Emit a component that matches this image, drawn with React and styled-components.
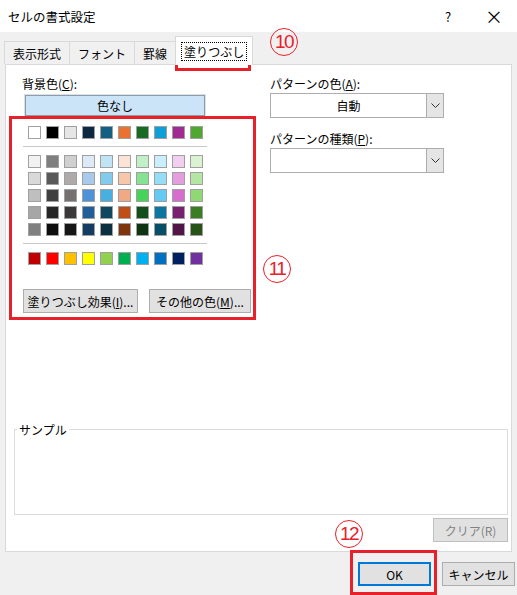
import React from "react";
import styled, { createGlobalStyle } from "styled-components";

const G = createGlobalStyle`
  html,body{margin:0;padding:0;background:#fff;}
  body{font-family:"Noto Sans CJK JP","Noto Sans",sans-serif;font-size:12px;color:#000;}
`;
const Win = styled.div`position:relative;width:517px;height:595px;background:#f0f0f0;overflow:hidden;display:flex;flex-direction:column;`;
const TitleBar = styled.div`height:32px;background:#fff;display:flex;align-items:center;padding-left:8px;font-size:12.5px;`;
const TitleText = styled.div`flex:1;`;
const TB = styled.div`width:46px;text-align:center;font-size:${p=>p.$s||14}px;`;
const Tabs = styled.div`display:flex;align-items:flex-end;padding:7px 0 0 5px;height:25px;`;
const Tab = styled.div`
  height:${p=>p.$on?28:22}px;padding:0 ${p=>p.$on?6:8}px;display:flex;align-items:center;
  border:1px solid #d9d9d9;border-bottom:none;margin-left:-1px;
  background:${p=>p.$on?"#fff":"#f0f0f0"};position:relative;z-index:${p=>p.$on?2:1};
  margin-bottom:${p=>p.$on?-1:0}px;
`;
const Focus = styled.span`outline:1px dotted #000;padding:0 2px;`;
const Panel = styled.div`margin:0 5px;height:486px;background:#fff;border:1px solid #d9d9d9;position:relative;display:flex;flex-direction:column;`;
const Cols = styled.div`display:flex;padding:10px 0 0 16px;gap:0;`;
const Left = styled.div`width:248px;display:flex;flex-direction:column;`;
const Right = styled.div`width:174px;display:flex;flex-direction:column;`;
const Label = styled.div`height:18px;line-height:18px;margin-bottom:${p=>p.$mb||0}px;`;
const U = styled.span`text-decoration:underline;`;
const NoColor = styled.div`width:178px;height:19px;margin-left:3px;border:1px solid #999;background:#cce4f7;text-align:center;line-height:19px;box-shadow:0 0 0 1px #cce4f7;`;
const Palette = styled.div`padding:10px 0 0 6px;display:flex;flex-direction:column;`;
const Row = styled.div`display:flex;gap:5px;margin-bottom:${p=>p.$mb||4}px;`;
const Sw = styled.div`width:11px;height:11px;border:1px solid #a0a0a0;background:${p=>p.$c};`;
const Sep = styled.div`width:184px;height:1px;background:#c8c8c8;margin:0 0 8px -5px;`;
const Btns = styled.div`display:flex;gap:11px;margin:20px 0 0 -5px;`;
const Btn = styled.div`height:24px;padding:0;white-space:nowrap;border:1px solid #adadad;background:#e1e1e1;display:flex;align-items:center;justify-content:center;width:${p=>p.$w}px;box-sizing:border-box;color:${p=>p.$dis?"#838383":"#000"};border-color:${p=>p.$dis?"#bfbfbf":"#adadad"};${p=>p.$def&&"border:2px solid #0078d7;"}`;
const Combo = styled.div`height:25px;border:1px solid #adadad;display:flex;box-sizing:border-box;margin-bottom:12px;`;
const ComboText = styled.div`flex:1;text-align:center;line-height:23px;`;
const Arrow = styled.div`width:16px;background:#e5e5e5;border-left:1px solid #adadad;display:flex;align-items:center;justify-content:center;`;
const Sample = styled.fieldset`margin:auto 3px 0 8px;height:92px;border:1px solid #dcdcdc;padding:0;`;
const Legend = styled.legend`padding:0 2px;margin-left:2px;font-size:12px;`;
const ClearRow = styled.div`display:flex;justify-content:flex-end;padding:3px 3px 9px 0;`;
const Footer = styled.div`display:flex;justify-content:flex-end;gap:11px;padding:10px 2px 0 0;`;
const Red = styled.div`position:absolute;border:3px solid #e8202a;left:${p=>p.$x}px;top:${p=>p.$y}px;width:${p=>p.$w}px;height:${p=>p.$h}px;box-sizing:border-box;pointer-events:none;`;
const Num = styled.div`position:absolute;left:${p=>p.$x}px;top:${p=>p.$y}px;width:28px;height:28px;border:1.5px solid #e8202a;border-radius:50%;color:#e8202a;font-family:"Liberation Sans",sans-serif;font-size:19px;display:flex;align-items:center;justify-content:center;box-sizing:border-box;letter-spacing:-1.5px;`;

const theme=["#ffffff","#000000","#e7e6e6","#0e2841","#156082","#e97132","#196b24","#0f9ed5","#a02b93","#4ea72e"];
const tints=[
["#f2f2f2","#7f7f7f","#d0d0d0","#dceaf7","#c0e4f5","#fbe3d6","#c1f0c8","#caeefb","#f2ceef","#daf2d0"],
["#d9d9d9","#595959","#aeaaaa","#a6c9ec","#83cbeb","#f7c7ac","#84e291","#95dcf7","#e59edd","#b4e5a2"],
["#bfbfbf","#404040","#757171","#4d93d9","#46b1e1","#f1a983","#47d359","#61cbf3","#d86dcd","#8ed973"],
["#a6a6a6","#262626","#3a3838","#215f9a","#0f4761","#c04f15","#124f1a","#0b769f","#782170","#3b7d23"],
["#808080","#0d0d0d","#171616","#153d64","#0a2f41","#7e350e","#0d3512","#074f69","#511548","#275317"]];
const std=["#c00000","#ff0000","#ffc000","#ffff00","#92d050","#00b050","#00b0f0","#0070c0","#002060","#7030a0"];

const Chev=()=>(<svg width="9" height="6" viewBox="0 0 9 6"><path d="M0.5 0.5 L4.5 4.5 L8.5 0.5" fill="none" stroke="#333" strokeWidth="1"/></svg>);

export default function App(){
  return(<Win><G/>
    <TitleBar><TitleText>セルの書式設定</TitleText><TB $s={13}>?</TB><TB $s={18}>×</TB></TitleBar>
    <Tabs><Tab>表示形式</Tab><Tab>フォント</Tab><Tab>罫線</Tab><Tab $on><Focus>塗りつぶし</Focus></Tab></Tabs>
    <Panel>
      <Cols>
        <Left>
          <Label $mb={2}>背景色(<U>C</U>):</Label>
          <NoColor>色なし</NoColor>
          <Palette>
            <Row $mb={7}>{theme.map((c,i)=><Sw key={i} $c={c}/>)}</Row>
            <Sep/>
            {tints.map((r,j)=><Row key={j} $mb={j===4?7:4}>{r.map((c,i)=><Sw key={i} $c={c}/>)}</Row>)}
            <Sep/>
            <Row>{std.map((c,i)=><Sw key={i} $c={c}/>)}</Row>
            <Btns><Btn $w={115}>塗りつぶし効果(<U>I</U>)...</Btn><Btn $w={102}>その他の色(<U>M</U>)...</Btn></Btns>
          </Palette>
        </Left>
        <Right>
          <Label>パターンの色(<U>A</U>):</Label>
          <Combo><ComboText>自動</ComboText><Arrow><Chev/></Arrow></Combo>
          <Label $mb={-6}>パターンの種類(<U>P</U>):</Label>
          <Combo style={{marginTop:6}}><ComboText/><Arrow><Chev/></Arrow></Combo>
        </Right>
      </Cols>
      <Sample><Legend>サンプル</Legend></Sample>
      <ClearRow><Btn $w={75} $dis>クリア(R)</Btn></ClearRow>
    </Panel>
    <Footer><Btn $w={73} $def>OK</Btn><Btn $w={73}>キャンセル</Btn></Footer>
    <Red $x={175} $y={37} $w={76} $h={34}/>
    <Num $x={270} $y={28}>10</Num>
    <Red $x={9} $y={116} $w={247} $h={204}/>
    <Num $x={263} $y={255}>11</Num>
    <Num $x={335} $y={520}>12</Num>
    <Red $x={350} $y={550} $w={87} $h={45}/>
  </Win>);
}
